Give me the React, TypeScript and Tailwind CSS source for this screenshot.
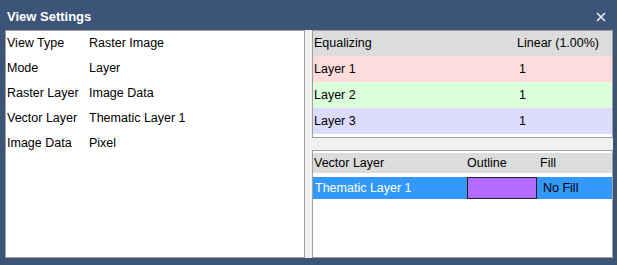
const props = [
  ["View Type", "Raster Image"],
  ["Mode", "Layer"],
  ["Raster Layer", "Image Data"],
  ["Vector Layer", "Thematic Layer 1"],
  ["Image Data", "Pixel"],
];

const bands = [
  { name: "Layer 1", value: "1", bg: "bg-[#ffdcdc]" },
  { name: "Layer 2", value: "1", bg: "bg-[#dcffdc]" },
  { name: "Layer 3", value: "1", bg: "bg-[#dcdcff]" },
];

export default function App() {
  return (
    <div className="flex h-[265px] w-[617px] flex-col bg-[#3d5479] font-['Liberation_Sans',Arial,sans-serif] text-[12.5px] text-black">
      {/* Title bar */}
      <div className="flex h-[30px] shrink-0 items-center justify-between pl-[7px] pr-[11px] pt-[4px]">
        <span className="text-[13px] font-bold text-white">View Settings</span>
        <svg className="h-[10px] w-[10px]" viewBox="0 0 10 10" fill="none" stroke="#e8ecf2" strokeWidth={1.6}>
          <path d="M1 1l8 8M9 1l-8 8" />
        </svg>
      </div>

      {/* Body */}
      <div className="ml-[5px] mr-[4px] mb-[7px] flex flex-1 gap-[7px] bg-[#f0f0f0]">
        {/* Properties list */}
        <div className="w-[300px] border border-[#a0a0a0] bg-white pt-[1px]">
          {props.map(([label, value]) => (
            <div key={label} className="flex h-[25px] items-start pl-[1px] pt-[2px]">
              <span className="w-[82px]">{label}</span>
              <span>{value}</span>
            </div>
          ))}
        </div>

        {/* Right column */}
        <div className="flex flex-1 flex-col gap-[12px]">
          <div className="h-[108px] border border-[#a0a0a0] bg-white">
            <div className="flex h-[25px] items-center bg-[#dcdcdc] pl-[1px]">
              <span className="w-[203px]">Equalizing</span>
              <span>Linear (1.00%)</span>
            </div>
            {bands.map((b) => (
              <div key={b.name} className={`flex h-[26px] items-center pl-[1px] ${b.bg}`}>
                <span className="w-[205px]">{b.name}</span>
                <span>{b.value}</span>
              </div>
            ))}
          </div>

          <div className="flex-1 border border-[#a0a0a0] bg-white pt-[2px]">
            <div className="flex h-[20px] items-center bg-[#dcdcdc] pl-[1px]">
              <span className="w-[153px]">Vector Layer</span>
              <span className="w-[73px]">Outline</span>
              <span>Fill</span>
            </div>
            <div className="mt-[4px] flex h-[22px] items-center bg-[#3399ff]">
              <span className="w-[154px] pl-[2px] text-white">Thematic Layer 1</span>
              <span className="h-[22px] w-[70px] border border-[#222] bg-[#b36bff]" />
              <span className="pl-[6px]">No Fill</span>
            </div>
          </div>
        </div>
      </div>
    </div>
  );
}
